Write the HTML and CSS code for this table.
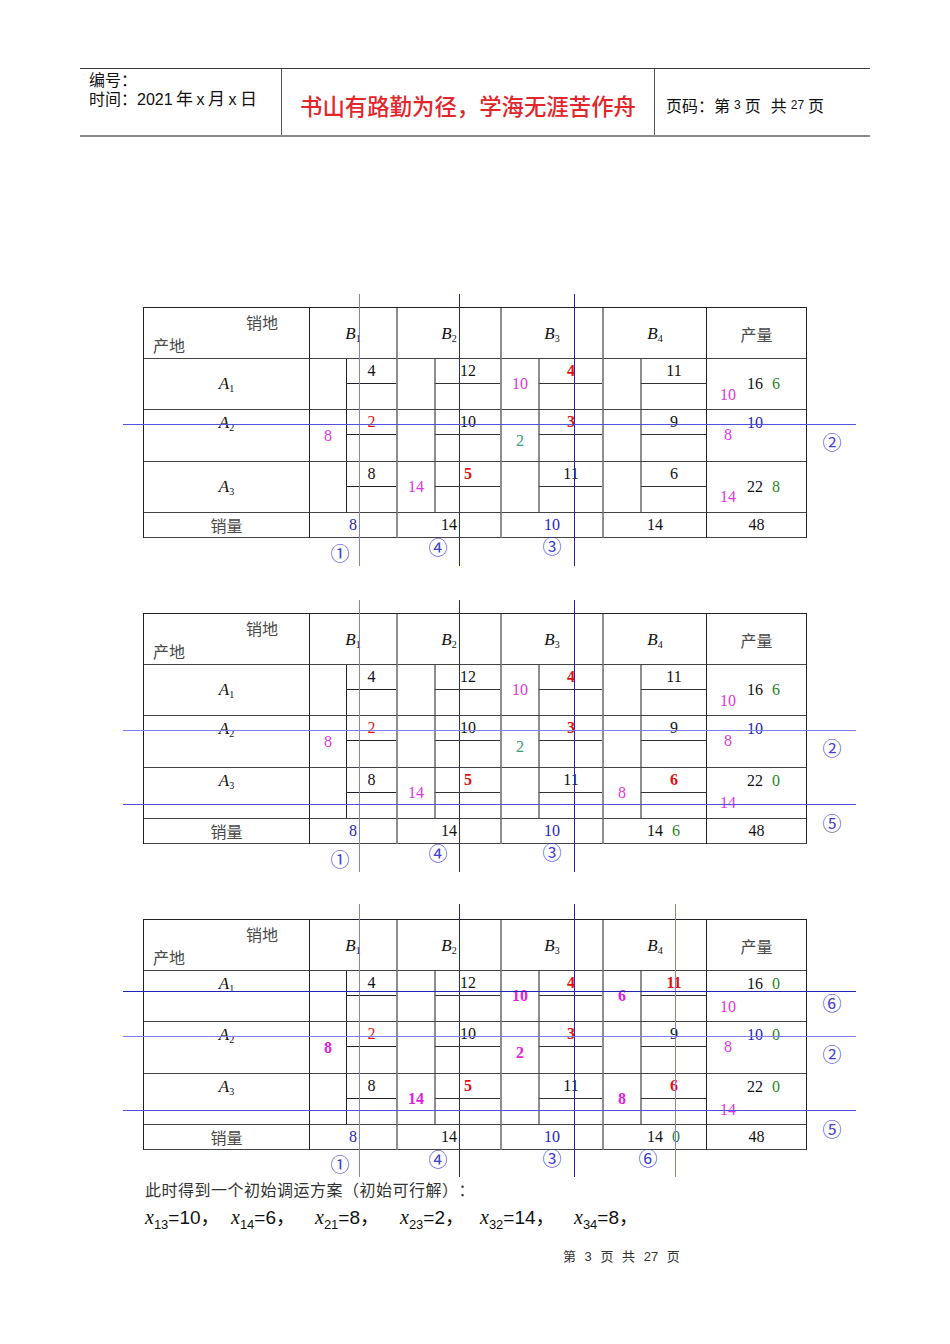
FILE: index.html
```html
<!DOCTYPE html>
<html lang="zh-CN">
<head>
<meta charset="utf-8">
<title>初始调运方案</title>
<link rel="stylesheet" href="styles.css">
</head>
<body>
<div class="page">
  <header class="doc-head">
    <div class="dh-left"><div>编号：</div><div>时间：2021<span class="sp">年</span>x<span class="sp">月</span>x<span class="sp">日</span></div></div>
    <div class="dh-title">书山有路勤为径，学海无涯苦作舟</div>
    <div class="dh-right">页码：第<span class="dg">3</span>页<span class="gap"></span>共<span class="dg">27</span>页</div>
  </header>

  <!-- Table 1 -->
  <section class="tbl-wrap first">
    <div class="tbl">
      <div class="c corner"><div class="xd">销地</div><div class="cd">产地</div></div>
      <div class="c hb gr"><span><i>B</i><sub>1</sub></span></div>
      <div class="c hb gr"><span><i>B</i><sub>2</sub></span></div>
      <div class="c hb gr"><span><i>B</i><sub>3</sub></span></div>
      <div class="c hb"><span><i>B</i><sub>4</sub></span></div>
      <div class="c hb cj">产量</div>

      <div class="c lab mid"><span><i>A</i><sub>1</sub></span></div>
      <div class="c dc gr"><div class="lp"></div><div class="rt">4</div><div class="rb"></div></div>
      <div class="c dc gr gi"><div class="lp"></div><div class="rt">12</div><div class="rb"></div></div>
      <div class="c dc gr gi"><div class="lp m">10</div><div class="rt redb">4</div><div class="rb"></div></div>
      <div class="c dc gi"><div class="lp"></div><div class="rt">11</div><div class="rb"></div></div>
      <div class="c pc mid"><span class="pm">16<span class="g">6</span></span><span class="pa a37 m">10</span></div>

      <div class="c lab top"><span><i>A</i><sub>2</sub></span></div>
      <div class="c dc gr"><div class="lp m">8</div><div class="rt red">2</div><div class="rb"></div></div>
      <div class="c dc gr gi"><div class="lp"></div><div class="rt">10</div><div class="rb"></div></div>
      <div class="c dc gr gi"><div class="lp t lo">2</div><div class="rt redb">3</div><div class="rb"></div></div>
      <div class="c dc gi"><div class="lp"></div><div class="rt">9</div><div class="rb"></div></div>
      <div class="c pc top"><span class="pm b">10</span><span class="pa a26 m">8</span></div>

      <div class="c lab mid"><span><i>A</i><sub>3</sub></span></div>
      <div class="c dc gr"><div class="lp"></div><div class="rt">8</div><div class="rb"></div></div>
      <div class="c dc gr gi"><div class="lp m">14</div><div class="rt redb">5</div><div class="rb"></div></div>
      <div class="c dc gr gi"><div class="lp"></div><div class="rt">11</div><div class="rb"></div></div>
      <div class="c dc gi"><div class="lp"></div><div class="rt">6</div><div class="rb"></div></div>
      <div class="c pc mid"><span class="pm">22<span class="g">8</span></span><span class="pa a36 m">14</span></div>

      <div class="c sl cj">销量</div>
      <div class="c sc gr b">8</div>
      <div class="c sc gr">14</div>
      <div class="c sc gr b">10</div>
      <div class="c sc">14</div>
      <div class="c sc">48</div>
    </div>
    <div class="vl x1 lb"></div>
    <div class="vl x2 db"></div>
    <div class="vl x3 db"></div>
    <div class="hl y2 mb"></div>
    <span class="cn at-b1">①</span>
    <span class="cn at-b2">④</span>
    <span class="cn at-b3">③</span>
    <span class="cn at-r2">②</span>
  </section>

  <!-- Table 2 -->
  <section class="tbl-wrap">
    <div class="tbl">
      <div class="c corner"><div class="xd">销地</div><div class="cd">产地</div></div>
      <div class="c hb gr"><span><i>B</i><sub>1</sub></span></div>
      <div class="c hb gr"><span><i>B</i><sub>2</sub></span></div>
      <div class="c hb gr"><span><i>B</i><sub>3</sub></span></div>
      <div class="c hb"><span><i>B</i><sub>4</sub></span></div>
      <div class="c hb cj">产量</div>

      <div class="c lab mid"><span><i>A</i><sub>1</sub></span></div>
      <div class="c dc gr"><div class="lp"></div><div class="rt">4</div><div class="rb"></div></div>
      <div class="c dc gr gi"><div class="lp"></div><div class="rt">12</div><div class="rb"></div></div>
      <div class="c dc gr gi"><div class="lp m">10</div><div class="rt redb">4</div><div class="rb"></div></div>
      <div class="c dc gi"><div class="lp"></div><div class="rt">11</div><div class="rb"></div></div>
      <div class="c pc mid"><span class="pm">16<span class="g">6</span></span><span class="pa a37 m">10</span></div>

      <div class="c lab top"><span><i>A</i><sub>2</sub></span></div>
      <div class="c dc gr"><div class="lp m">8</div><div class="rt red">2</div><div class="rb"></div></div>
      <div class="c dc gr gi"><div class="lp"></div><div class="rt">10</div><div class="rb"></div></div>
      <div class="c dc gr gi"><div class="lp t lo">2</div><div class="rt redb">3</div><div class="rb"></div></div>
      <div class="c dc gi"><div class="lp"></div><div class="rt">9</div><div class="rb"></div></div>
      <div class="c pc top"><span class="pm b">10</span><span class="pa a26 m">8</span></div>

      <div class="c lab top"><span><i>A</i><sub>3</sub></span></div>
      <div class="c dc gr"><div class="lp"></div><div class="rt">8</div><div class="rb"></div></div>
      <div class="c dc gr gi"><div class="lp m">14</div><div class="rt redb">5</div><div class="rb"></div></div>
      <div class="c dc gr gi"><div class="lp"></div><div class="rt">11</div><div class="rb"></div></div>
      <div class="c dc gi"><div class="lp m">8</div><div class="rt redb">6</div><div class="rb"></div></div>
      <div class="c pc top"><span class="pm">22<span class="g">0</span></span><span class="pa a36 m">14</span></div>

      <div class="c sl cj">销量</div>
      <div class="c sc gr b">8</div>
      <div class="c sc gr">14</div>
      <div class="c sc gr b">10</div>
      <div class="c sc"><span class="sv">14<span class="gx g">6</span></span></div>
      <div class="c sc">48</div>
    </div>
    <div class="vl x1 lb"></div>
    <div class="vl x2 db"></div>
    <div class="vl x3 db"></div>
    <div class="hl y2 lb"></div>
    <div class="hl y3 mb"></div>
    <span class="cn at-b1">①</span>
    <span class="cn at-b2">④</span>
    <span class="cn at-b3">③</span>
    <span class="cn at-r2">②</span>
    <span class="cn at-r3">⑤</span>
  </section>

  <!-- Table 3 -->
  <section class="tbl-wrap">
    <div class="tbl">
      <div class="c corner"><div class="xd">销地</div><div class="cd">产地</div></div>
      <div class="c hb gr"><span><i>B</i><sub>1</sub></span></div>
      <div class="c hb gr"><span><i>B</i><sub>2</sub></span></div>
      <div class="c hb gr"><span><i>B</i><sub>3</sub></span></div>
      <div class="c hb"><span><i>B</i><sub>4</sub></span></div>
      <div class="c hb cj">产量</div>

      <div class="c lab top"><span><i>A</i><sub>1</sub></span></div>
      <div class="c dc gr"><div class="lp"></div><div class="rt">4</div><div class="rb"></div></div>
      <div class="c dc gr gi"><div class="lp"></div><div class="rt">12</div><div class="rb"></div></div>
      <div class="c dc gr gi"><div class="lp mbd">10</div><div class="rt redb">4</div><div class="rb"></div></div>
      <div class="c dc gi"><div class="lp mbd">6</div><div class="rt redb">11</div><div class="rb"></div></div>
      <div class="c pc top"><span class="pm">16<span class="g">0</span></span><span class="pa a37 m">10</span></div>

      <div class="c lab top"><span><i>A</i><sub>2</sub></span></div>
      <div class="c dc gr"><div class="lp mbd">8</div><div class="rt red">2</div><div class="rb"></div></div>
      <div class="c dc gr gi"><div class="lp"></div><div class="rt">10</div><div class="rb"></div></div>
      <div class="c dc gr gi"><div class="lp mbd lo">2</div><div class="rt redb">3</div><div class="rb"></div></div>
      <div class="c dc gi"><div class="lp"></div><div class="rt">9</div><div class="rb"></div></div>
      <div class="c pc top"><span class="pm"><span class="b">10</span><span class="g">0</span></span><span class="pa a26 m">8</span></div>

      <div class="c lab top"><span><i>A</i><sub>3</sub></span></div>
      <div class="c dc gr"><div class="lp"></div><div class="rt">8</div><div class="rb"></div></div>
      <div class="c dc gr gi"><div class="lp mbd">14</div><div class="rt redb">5</div><div class="rb"></div></div>
      <div class="c dc gr gi"><div class="lp"></div><div class="rt">11</div><div class="rb"></div></div>
      <div class="c dc gi"><div class="lp mbd">8</div><div class="rt redb">6</div><div class="rb"></div></div>
      <div class="c pc top"><span class="pm">22<span class="g">0</span></span><span class="pa a37 m">14</span></div>

      <div class="c sl cj">销量</div>
      <div class="c sc gr b">8</div>
      <div class="c sc gr">14</div>
      <div class="c sc gr b">10</div>
      <div class="c sc"><span class="sv">14<span class="gx g">0</span></span></div>
      <div class="c sc">48</div>
    </div>
    <div class="vl x1 lb tall"></div>
    <div class="vl x2 db tall"></div>
    <div class="vl x3 db tall"></div>
    <div class="vl x4 lb tall"></div>
    <div class="hl y1 db"></div>
    <div class="hl y2 lb"></div>
    <div class="hl y3 mb"></div>
    <span class="cn at-r1">⑥</span>
    <span class="cn at-r2">②</span>
    <span class="cn at-r3">⑤</span>
    <span class="cn at-b1 low">①</span>
    <span class="cn at-b2">④</span>
    <span class="cn at-b3">③</span>
    <span class="cn at-b4">⑥</span>
  </section>

  <p class="note">此时得到一个初始调运方案（初始可行解）：</p>
  <div class="formula">
    <span class="fx"><i>x</i><sub>13</sub>=10，</span>
    <span class="fx"><i>x</i><sub>14</sub>=6，</span>
    <span class="fx"><i>x</i><sub>21</sub>=8，</span>
    <span class="fx"><i>x</i><sub>23</sub>=2，</span>
    <span class="fx"><i>x</i><sub>32</sub>=14，</span>
    <span class="fx"><i>x</i><sub>34</sub>=8，</span>
  </div>
  <footer class="foot">第 3 页 共 27 页</footer>
</div>
</body>
</html>
```

FILE: styles.css
```css
* { box-sizing: border-box; margin: 0; padding: 0; }
html, body { background: #fff; }
body {
  width: 950px;
  min-height: 1344px;
  font-family: "Liberation Serif", "Noto Sans CJK SC", serif;
  color: #111;
  text-spacing-trim: space-all;
}
.page { padding: 68px 0 0 80px; }

/* ---------- document header ---------- */
.doc-head {
  width: 790px;
  height: 69px;
  display: grid;
  grid-template-columns: 202px 373px 215px;
  border-top: 1px solid #3a3a3a;
  border-bottom: 2px solid #8a8a8a;
  font-family: "Liberation Sans", "Noto Sans CJK SC", sans-serif;
  color: #111;
}
.dh-left {
  border-right: 1px solid #555;
  padding: 2px 0 0 9px;
  font-size: 16px;
  line-height: 19px;
  white-space: nowrap;
}
.dh-left .sp { padding: 0 3.5px; font-size: 17px; }
.dh-title {
  border-right: 1px solid #555;
  display: flex;
  align-items: center;
  justify-content: center;
  padding-top: 6px;
  color: #e3262b;
  font-family: "Noto Sans CJK SC", sans-serif;
  font-size: 22.4px;
  font-weight: 500;
}
.dh-right {
  display: flex;
  align-items: center;
  padding: 6px 0 0 11px;
  font-size: 16px;
  white-space: nowrap;
}
.dh-right .dg { font-size: 12px; padding: 0 4px; }
.dh-right .gap { width: 10px; }

/* ---------- transport tables ---------- */
.tbl-wrap {
  position: relative;
  width: 664px;
  margin: 75px 0 0 63px;
}
.tbl-wrap.first { margin-top: 170px; }
.tbl {
  display: grid;
  grid-template-columns: 166px 88px 104px 102px 103px 100px;
  grid-template-rows: 51px 51px 52px 51px 25px;
  border-top: 1px solid #222;
  border-left: 1px solid #222;
  font-size: 16px;
  line-height: 20px;
}
.c {
  border-right: 1px solid #222;
  border-bottom: 1px solid #444;
  min-width: 0;
}
.c.gr { border-right: 2px solid #8e8e8e; }

.cj {
  font-family: "Noto Sans CJK SC", sans-serif;
  color: #4a4a4a;
  font-size: 16px;
}
.corner {
  font-family: "Noto Sans CJK SC", sans-serif;
  color: #4a4a4a;
  padding-top: 4px;
}
.corner .xd { text-align: right; padding-right: 31px; }
.corner .cd { padding-left: 9px; margin-top: 3px; }

.hb, .lab {
  display: flex;
  justify-content: center;
  align-items: center;
}
.hb { padding-top: 2px; }
.hb i, .lab i { font-size: 17px; }
sub { font-size: 10px; vertical-align: -3px; line-height: 0; }
.lab.top { align-items: flex-start; padding-top: 3px; }

/* data cells with cost sub-box */
.dc {
  display: grid;
  grid-template-columns: 36px 1fr;
  grid-template-rows: 25px 1fr;
}
.lp {
  grid-row: 1 / 3;
  display: flex;
  align-items: center;
  justify-content: center;
}
.lp.lo { padding-top: 10px; }
.rt, .rb { border-left: 1px solid #222; }
.rt {
  border-bottom: 1px solid #222;
  display: flex;
  align-items: center;
  justify-content: center;
}
.gi .rt, .gi .rb { border-left: 2px solid #8e8e8e; }
.gi .rt { border-bottom: 1px solid #333; }

/* supply column */
.pc {
  position: relative;
  display: flex;
  padding-left: 40px;
}
.pc.mid { align-items: center; }
.pc.top { align-items: flex-start; padding-top: 3px; }
.pm .g { margin-left: 9px; }
.pa {
  position: absolute;
  left: 6px;
  width: 30px;
  text-align: center;
}
.a26 { top: 15px; }
.a36 { top: 25px; }
.a37 { top: 26px; }

/* demand row */
.sl, .sc {
  display: flex;
  align-items: center;
  justify-content: center;
}
.gx { position: absolute; margin-left: 9px; }

/* colours */
.red { color: #e41414; }
.redb { color: #e41010; font-weight: bold; }
.m { color: #e035e0; }
.mbd { color: #e020e0; font-weight: bold; }
.t { color: #3c9a72; }
.b { color: #1e1ec4; }
.g { color: #23862a; }

/* blue overlay lines */
.vl { position: absolute; top: -13px; height: 272px; width: 1px; }
.vl.tall { top: -15px; height: 273px; }
.x1 { left: 216px; }
.x2 { left: 316px; }
.x3 { left: 431px; }
.x4 { left: 532px; }
.hl { position: absolute; left: -20px; width: 733px; height: 1px; }
.y1 { top: 72px; }
.y2 { top: 117px; }
.y3 { top: 191px; }
.lb { background: #7f7ff0; }
.db { background: #2424b4; }
.mb { background: #5252dc; }

/* circled step markers */
.cn {
  position: absolute;
  transform: translate(-50%, -50%);
  font-family: "Noto Sans CJK SC", sans-serif;
  font-size: 19px;
  line-height: 1;
  color: #4040d4;
}
.at-b1 { left: 197px; top: 245px; }
.at-b1.low { top: 244px; }
.at-b2 { left: 295px; top: 239px; }
.at-b3 { left: 409px; top: 238px; }
.at-b4 { left: 505px; top: 238px; }
.at-r1 { left: 689px; top: 83px; }
.at-r2 { left: 689px; top: 134px; }
.at-r3 { left: 689px; top: 209px; }

/* text below */
.note {
  margin: 28px 0 0 65px;
  font-family: "Noto Sans CJK SC", sans-serif;
  font-size: 16px;
  line-height: 22px;
  letter-spacing: 0.5px;
  color: #333;
}
.formula {
  margin: 4px 0 0 65px;
  display: grid;
  grid-template-columns: 86px 84px 85px 80px 94px auto;
  font-family: "Liberation Sans", "Noto Sans CJK SC", sans-serif;
  font-size: 19px;
  line-height: 26px;
  color: #111;
  white-space: nowrap;
}
.formula i { font-family: "Liberation Serif", serif; font-size: 20px; }
.formula sub { font-size: 13px; vertical-align: -5px; }
.foot {
  margin: 17px 0 0 483px;
  font-family: "Liberation Sans", "Noto Sans CJK SC", sans-serif;
  font-size: 13px;
  line-height: 18px;
  word-spacing: 5px;
  color: #333;
}
```
